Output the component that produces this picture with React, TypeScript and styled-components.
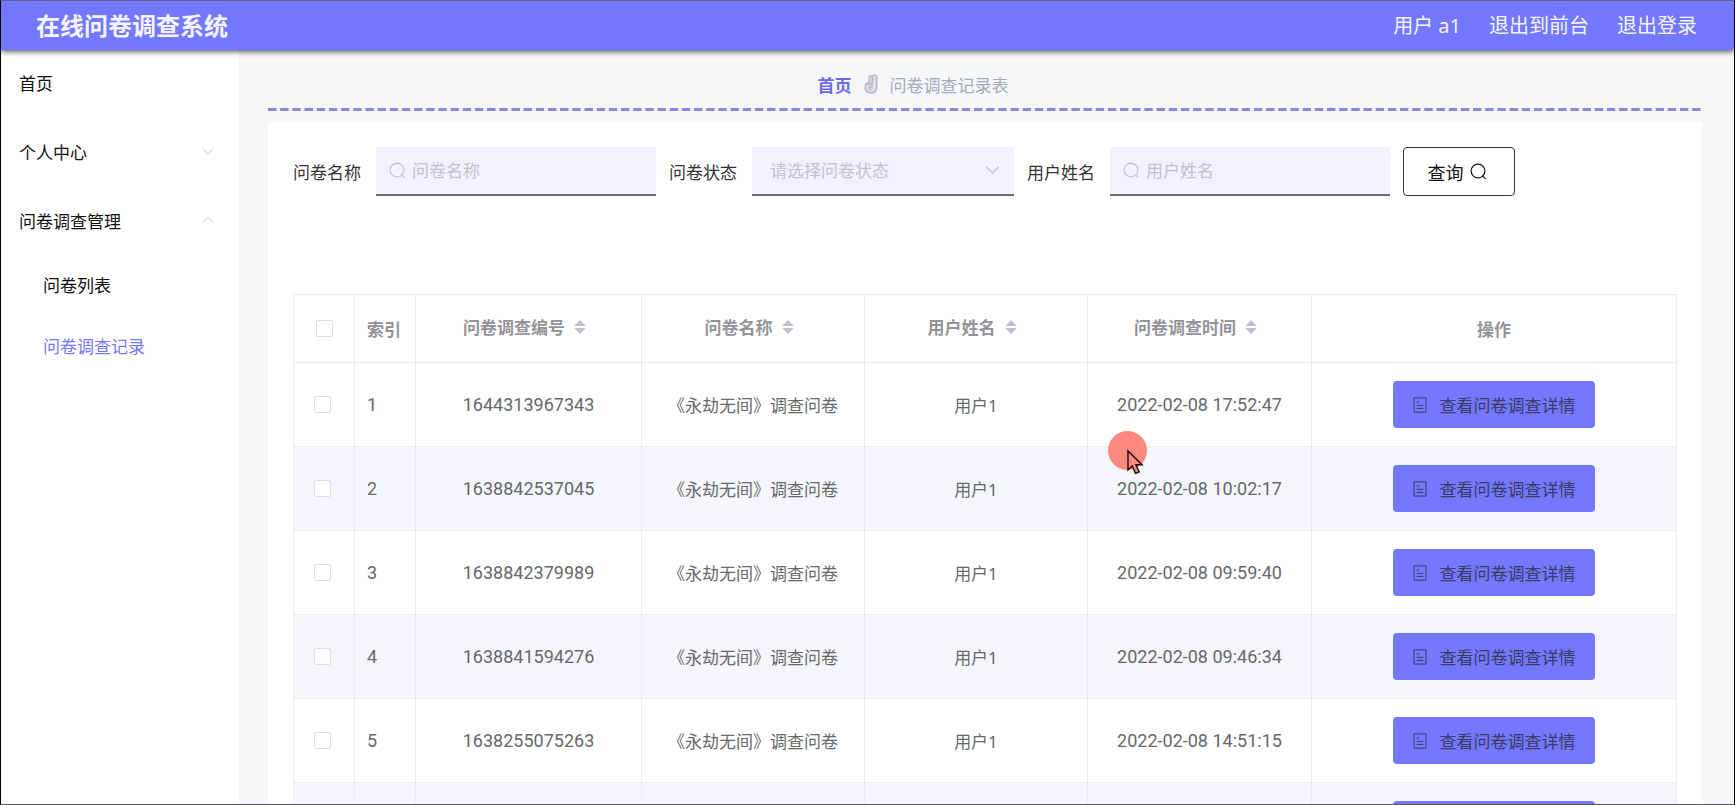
import React from 'react';
import styled, { createGlobalStyle, css } from 'styled-components';

const violet = '#7378ff';

const GlobalStyle = createGlobalStyle`
  * { box-sizing: border-box; }
  html, body { margin: 0; height: 100%; overflow: hidden; }
  #root { height: 100%; }
  body, button, input, select {
    font-family: "Noto Sans", "Noto Sans CJK SC", sans-serif;
    font-size: 17px;
  }
`;

const Frame = styled.div`
  position: relative;
  display: flex;
  flex-direction: column;
  height: 100vh;
  overflow: hidden;
  border: 1px solid #000;
  border-top-color: #5f5f9c;
  border-bottom-color: #55555c;
  background: #f6f7f9;
`;

const Header = styled.header`
  z-index: 1;
  flex: none;
  display: flex;
  align-items: center;
  justify-content: space-between;
  height: 49px;
  padding: 0 37px 0 35px;
  background: ${violet};
  box-shadow: 0 1px 6px rgba(0, 0, 0, 0.8);
  color: #f4f5ff;
`;

const Title = styled.h1`
  margin: 0;
  font-size: 24px;
  line-height: 48px;
  font-weight: 700;
`;

const UserNav = styled.nav`
  display: flex;
  gap: 28px;
  font-size: 20px;
  line-height: 48px;
`;

const NavLink = styled.a`
  color: inherit;
  text-decoration: none;
`;

const Body = styled.div`
  flex: 1;
  min-height: 0;
  display: flex;
`;

const Sidebar = styled.nav`
  flex: none;
  width: 238px;
  background: #fff;
`;

const MenuItem = styled.a<{ $sub?: boolean; $active?: boolean }>`
  display: flex;
  align-items: center;
  justify-content: space-between;
  height: ${p => (p.$sub ? 61 : 69)}px;
  padding: 0 25px ${p => (p.$sub ? 6 : 4)}px ${p => (p.$sub ? 42 : 18)}px;
  color: ${p => (p.$active ? violet : '#111')};
  text-decoration: none;
`;

const Main = styled.main`
  flex: 1;
  min-width: 0;
  display: flex;
  flex-direction: column;
  padding: 0 32px 0 29px;
`;

const Breadcrumb = styled.nav`
  flex: none;
  display: flex;
  align-items: center;
  justify-content: center;
  gap: 12px;
  height: 58px;
  padding: 10px 144px 0 0;
  color: #a3abba;
`;

const HomeLink = styled.a`
  color: #6b6bea;
  font-weight: 700;
  text-decoration: none;
`;

const Dashes = styled.div`
  flex: none;
  height: 3px;
  margin-bottom: 11px;
  background: linear-gradient(90deg, #8888e4 8px, transparent 8px) 0 0 / calc((100% + 4px) / 118) 100%;
`;

const Card = styled.section`
  flex: 1;
  min-height: 0;
  padding: 25px;
  background: #fff;
  overflow: hidden;
`;

const Filters = styled.form`
  display: flex;
  align-items: center;
  gap: 13px;
  height: 49px;
  margin-bottom: 98px;
`;

const Field = styled.div`
  display: flex;
  align-items: center;
  gap: 15px;
  color: #333;
`;

const Control = styled.div<{ $select?: boolean }>`
  display: flex;
  align-items: center;
  width: ${p => (p.$select ? 262 : 280)}px;
  height: 49px;
  padding: 0 ${p => (p.$select ? 14 : 13)}px;
  gap: 6px;
  border-bottom: 2px solid #6b6b70;
  background: #f3f1fe;
  color: #c3c2cd;
`;

const bare = css`
  flex: 1;
  min-width: 0;
  height: 46px;
  border: 0;
  outline: 0;
  background: transparent;
  color: #c3c2cd;
`;

const TextInput = styled.input`
  ${bare}
  padding: 0;
  &::placeholder { color: #c3c2cd; opacity: 1; }
`;

const Select = styled.select`
  ${bare}
  appearance: none;
  padding: 0 4px;
`;

const SearchButton = styled.button`
  display: flex;
  align-items: center;
  justify-content: center;
  gap: 6px;
  width: 112px;
  height: 49px;
  padding: 0 4px 0 0;
  border: 1px solid #333;
  border-radius: 4px;
  background: #fff;
  color: #111;
  font-size: 18px;
`;

const Table = styled.table`
  width: 100%;
  table-layout: fixed;
  border-collapse: collapse;
  color: #66686c;
`;

const HeadCell = styled.th<{ $left?: boolean }>`
  height: 68px;
  padding: 0 12px;
  border: 1px solid #ebecef;
  color: #949498;
  font-weight: 700;
  text-align: ${p => (p.$left ? 'left' : 'center')};
`;

const SortCell = styled(HeadCell)`
  padding: 0 20px 4px 12px;
`;

const Row = styled.tr`
  height: 84px;
  &:nth-child(even) { background: #f5f6fa; }
`;

const Cell = styled.td<{ $left?: boolean; $number?: boolean }>`
  padding: 0 12px;
  border: 1px solid #ebecef;
  text-align: ${p => (p.$left ? 'left' : 'center')};
  white-space: nowrap;
  ${p => p.$number && css`
    font-family: Roboto, sans-serif;
    font-size: 18px;
  `}
`;

const SortLabel = styled.span`
  display: inline-flex;
  align-items: center;
  gap: 9px;
`;

const Tick = styled.input`
  appearance: none;
  display: block;
  width: 17px;
  height: 17px;
  margin: 0 auto;
  border: 1px solid #dcdfe6;
  border-radius: 2px;
  background: #fff;
`;

const TickCell = styled(Cell)`
  padding: 0 16px 0 12px;
`;

const DetailButton = styled.button`
  display: inline-flex;
  align-items: center;
  justify-content: center;
  gap: 13px;
  width: 202px;
  height: 47px;
  padding: 0;
  border: 0;
  border-radius: 4px;
  background: ${violet};
  color: #393b63;
  vertical-align: middle;
`;

const Pointer = styled.svg`
  position: absolute;
  left: 1107px;
  top: 429px;
  z-index: 2;
  pointer-events: none;
`;

const SearchIcon = () => (
  <svg width="17" height="17" viewBox="0 0 17 17" fill="none" stroke="currentColor" strokeWidth="1.2" aria-hidden="true">
    <circle cx="8" cy="8" r="6.9" />
    <path d="M12.6 12.8 15.6 15.8" />
  </svg>
);

const Chevron = ({ up, color = '#dadada', size = 12 }: { up?: boolean; color?: string; size?: number }) => (
  <svg width={size} height={size} viewBox="0 0 12 12" fill="none" stroke={color} strokeWidth="1.1" aria-hidden="true">
    <path d={up ? 'M1 7.5 6 2.5 11 7.5' : 'M1 3 6 8 11 3'} />
  </svg>
);

const SortIcon = () => (
  <svg width="12" height="16" viewBox="0 0 12 16" fill="#c0c1c6" aria-hidden="true">
    <path d="M6 1 11.8 7H.2zM6 15 .2 9h11.6z" />
  </svg>
);

const HandIcon = () => (
  <svg width="14" height="20" viewBox="0 0 14 20" fill="#dcdee2" stroke="#b9bbc0" strokeWidth="1.5" strokeLinejoin="round" aria-hidden="true">
    <path d="M5.2 8.6V3.2Q5.2 1.8 6.6 1.8 8 1.8 8.2 3.2L8.4 2.4Q8.8 1 10.4 1 12.6 1 12.8 3V13.4Q12.6 19 7 19 1.2 19 1.2 13.6 1 9 5.2 8.6z" />
    <path d="M8.3 3V9.4M2.6 11Q5.4 8.6 7.6 10.6 9 12.8 6.4 13.6L4.6 13.2M6.4 13.6 5.4 15.8" fill="none" />
  </svg>
);

const DocIcon = () => (
  <svg width="14" height="16" viewBox="0 0 14 16" fill="none" stroke="currentColor" strokeWidth="1" aria-hidden="true">
    <path d="M1 .9h12v14.2H1zM3.6 5h2.6M3.6 8.4h6.8M3.6 11.4h6.8" />
  </svg>
);

const sortable = ['问卷调查编号', '问卷名称', '用户姓名', '问卷调查时间'];

const records = [
  ['1644313967343', '2022-02-08 17:52:47'],
  ['1638842537045', '2022-02-08 10:02:17'],
  ['1638842379989', '2022-02-08 09:59:40'],
  ['1638841594276', '2022-02-08 09:46:34'],
  ['1638255075263', '2022-02-08 14:51:15'],
  ['', ''],
];

export default function App() {
  return (
    <Frame>
      <GlobalStyle />
      <Header>
        <Title>在线问卷调查系统</Title>
        <UserNav>
          <NavLink href="#user">用户 a1</NavLink>
          <NavLink href="#front">退出到前台</NavLink>
          <NavLink href="#logout">退出登录</NavLink>
        </UserNav>
      </Header>
      <Body>
        <Sidebar>
          <MenuItem href="#home">首页</MenuItem>
          <MenuItem href="#me">个人中心<Chevron /></MenuItem>
          <MenuItem href="#survey">问卷调查管理<Chevron up /></MenuItem>
          <MenuItem href="#list" $sub>问卷列表</MenuItem>
          <MenuItem href="#records" $sub $active>问卷调查记录</MenuItem>
        </Sidebar>
        <Main>
          <Breadcrumb>
            <HomeLink href="#home">首页</HomeLink>
            <HandIcon />
            <span>问卷调查记录表</span>
          </Breadcrumb>
          <Dashes />
          <Card>
            <Filters onSubmit={e => e.preventDefault()}>
              <Field>
                <label htmlFor="survey-name">问卷名称</label>
                <Control>
                  <SearchIcon />
                  <TextInput id="survey-name" placeholder="问卷名称" />
                </Control>
              </Field>
              <Field>
                <label htmlFor="survey-state">问卷状态</label>
                <Control $select>
                  <Select id="survey-state" defaultValue="">
                    <option value="">请选择问卷状态</option>
                  </Select>
                  <Chevron color="#c3c2cd" size={15} />
                </Control>
              </Field>
              <Field>
                <label htmlFor="user-name">用户姓名</label>
                <Control>
                  <SearchIcon />
                  <TextInput id="user-name" placeholder="用户姓名" />
                </Control>
              </Field>
              <SearchButton type="submit">查询<SearchIcon /></SearchButton>
            </Filters>
            <Table>
              <colgroup>
                <col style={{ width: '61px' }} />
                <col style={{ width: '61px' }} />
                <col style={{ width: '226px' }} />
                <col style={{ width: '223px' }} />
                <col style={{ width: '223px' }} />
                <col style={{ width: '224px' }} />
                <col />
              </colgroup>
              <thead>
                <tr>
                  <HeadCell><Tick type="checkbox" aria-label="全选" /></HeadCell>
                  <HeadCell $left>索引</HeadCell>
                  {sortable.map(name => (
                    <SortCell key={name}><SortLabel>{name}<SortIcon /></SortLabel></SortCell>
                  ))}
                  <HeadCell>操作</HeadCell>
                </tr>
              </thead>
              <tbody>
                {records.map(([id, time], i) => (
                  <Row key={i}>
                    <TickCell><Tick type="checkbox" aria-label={`选择 ${i + 1}`} /></TickCell>
                    <Cell $left $number>{id && i + 1}</Cell>
                    <Cell $number>{id}</Cell>
                    <Cell>{id && '《永劫无间》调查问卷'}</Cell>
                    <Cell>{id && '用户1'}</Cell>
                    <Cell $number>{time}</Cell>
                    <Cell><DetailButton type="button"><DocIcon />{id && '查看问卷调查详情'}</DetailButton></Cell>
                  </Row>
                ))}
              </tbody>
            </Table>
          </Card>
        </Main>
      </Body>
      <Pointer width="40" height="46" viewBox="0 0 40 46" aria-hidden="true">
        <circle cx="19.5" cy="20.5" r="19.5" fill="#ff6f63" fillOpacity="0.82" />
        <path d="M20 21v19l4.3-4 3.2 7.4 3.6-1.6-3.2-7H34z" fill="#ff8a80" stroke="#1a0505" strokeWidth="1.4" />
      </Pointer>
    </Frame>
  );
}
